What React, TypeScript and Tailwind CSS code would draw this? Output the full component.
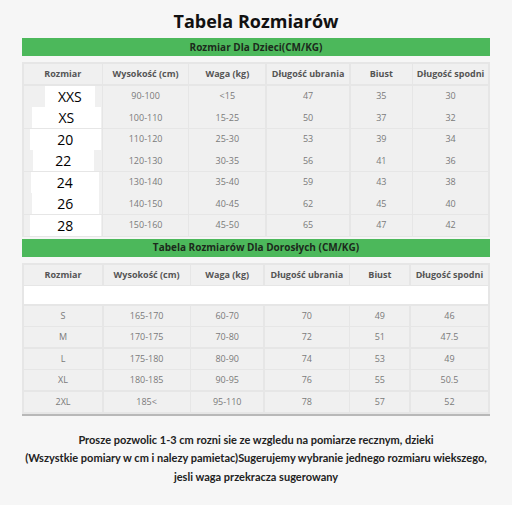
import React from 'react'

const kidsCols = 'grid grid-cols-[78fr_85fr_76fr_83fr_61fr_75fr] gap-x-[1.5px]'
const adultCols = 'grid grid-cols-[78fr_86fr_72fr_84fr_59fr_77fr] gap-x-[1.5px]'

const headers = ['Rozmiar', 'Wysokość (cm)', 'Waga (kg)', 'Długość ubrania', 'Biust', 'Długość spodni']

const kids = [
  { size: 'XXS', box: 'ml-[21px] mr-[7px]', rest: ['90-100', '<15', '47', '35', '30'] },
  { size: 'XS', box: 'ml-[8px] mr-[1px]', rest: ['100-110', '15-25', '50', '37', '32'] },
  { size: '20', box: 'ml-[6px] mr-[1px]', rest: ['110-120', '25-30', '53', '39', '34'] },
  { size: '22', box: 'ml-[9px] mr-[8px]', rest: ['120-130', '30-35', '56', '41', '36'] },
  { size: '24', box: 'ml-[7px] mr-[3px]', rest: ['130-140', '35-40', '59', '43', '38'] },
  { size: '26', box: 'ml-[8px] mr-[3px]', rest: ['140-150', '40-45', '62', '45', '40'] },
  { size: '28', box: 'ml-[6px] mr-[1px]', rest: ['150-160', '45-50', '65', '47', '42'] },
]

const adults = [
  ['S', '165-170', '60-70', '70', '49', '46'],
  ['M', '170-175', '70-80', '72', '51', '47.5'],
  ['L', '175-180', '80-90', '74', '53', '49'],
  ['XL', '180-185', '90-95', '76', '55', '50.5'],
  ['2XL', '185<', '95-110', '78', '57', '52'],
]

function GreenBar({ title }: { title: string }) {
  return (
    <div className="mx-[22px] h-[18px] bg-[#4cb85b] flex items-center justify-center text-[10px] font-bold text-[#1c2a1c]">
      {title}
    </div>
  )
}

function HeaderRow({ cols }: { cols: string }) {
  return (
    <div className={`${cols} h-[20px]`}>
      {headers.map((h) => (
        <div
          key={h}
          className="bg-[#f0f0f0] flex items-center justify-center text-[9px] font-bold text-[#555] whitespace-nowrap">
          {h}
        </div>
      ))}
    </div>
  )
}

function Cell({ children }: { children: React.ReactNode }) {
  return (
    <div className="bg-[#f0f0f0] flex items-center justify-center text-[9px] text-[#7a7a7a]">
      {children}
    </div>
  )
}

export default function App() {
  return (
    <div className="w-[512px] h-[505px] bg-[#f6f6f6] font-['Open_Sans',sans-serif] overflow-hidden">
      <h1 className="pt-[8px] text-center text-[18px] leading-[27px] font-bold text-[#111]">
        Tabela Rozmiarów
      </h1>
      <div className="mt-[3px]">
        <GreenBar title="Rozmiar Dla Dzieci(CM/KG)" />
      </div>

      <div className="mx-[22px] mt-[6px] bg-[#e6e6e6] p-[2px] flex flex-col gap-y-[1.5px]">
        <HeaderRow cols={kidsCols} />
        {kids.map((r) => (
          <div key={r.size} className={`${kidsCols} h-[20px]`}>
            <div className="bg-[#f0f0f0] flex">
              <div
                className={`${r.box} flex-1 bg-white flex items-center justify-center text-[14px] text-black`}>
                {r.size}
              </div>
            </div>
            {r.rest.map((v, i) => (
              <Cell key={i}>{v}</Cell>
            ))}
          </div>
        ))}
      </div>

      <div className="mt-[2px]">
        <GreenBar title="Tabela Rozmiarów Dla Dorosłych (CM/KG)" />
      </div>

      <div className="mx-[22px] mt-[6px] bg-[#e6e6e6] p-[2px] flex flex-col gap-y-[1.5px] border-b-2 border-[#b8b8b8]">
        <HeaderRow cols={adultCols} />
        <div className="h-[18px] bg-white" />
        {adults.map((r) => (
          <div key={r[0]} className={`${adultCols} h-[20px]`}>
            {r.map((v, i) => (
              <Cell key={i}>{v}</Cell>
            ))}
          </div>
        ))}
      </div>

      <div className="mt-[15px] text-center font-['Lato',sans-serif] font-bold text-[11px] leading-[18.5px] text-[#222]">
        <p>Prosze pozwolic 1-3 cm rozni sie ze wzgledu na pomiarze recznym, dzieki</p>
        <p>(Wszystkie pomiary w cm i nalezy pamietac)Sugerujemy wybranie jednego rozmiaru wiekszego,</p>
        <p>jesli waga przekracza sugerowany</p>
      </div>
    </div>
  )
}
